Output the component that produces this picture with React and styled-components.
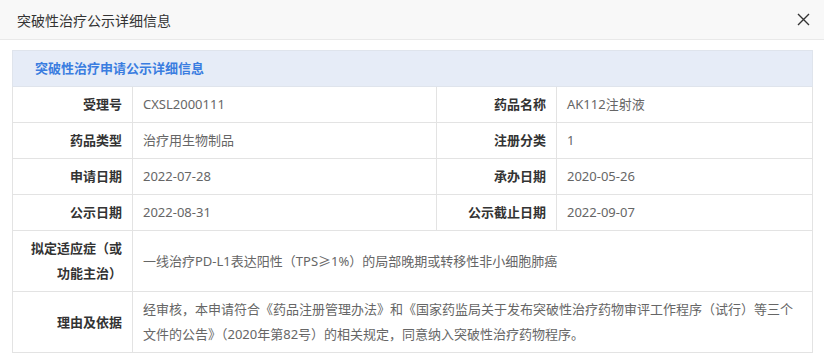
import React from "react";
import styled, { createGlobalStyle } from "styled-components";

const GlobalStyle = createGlobalStyle`
  body {
    margin: 0;
    background: #fff;
    font-family: "Noto Sans", "Noto Sans CJK SC", sans-serif;
  }
`;

const Dialog = styled.div`
  width: 824px;
  height: 360px;
  background: #fff;
  overflow: hidden;
`;

const Header = styled.div`
  height: 40px;
  box-sizing: border-box;
  display: flex;
  align-items: center;
  justify-content: space-between;
  padding: 0 13px 0 17px;
  background: #f8f8f8;
  border-bottom: 1px solid #e9e9e9;
`;

const Title = styled.h2`
  margin: 0;
  font-size: 14px;
  font-weight: normal;
  color: #333;
`;

const Close = styled.button`
  border: 0;
  background: none;
  padding: 0;
  width: 16px;
  height: 16px;
  display: flex;
  align-items: center;
  justify-content: center;
  cursor: pointer;
`;

const Body = styled.div`
  padding: 10px 12px 0;
`;

const Table = styled.table`
  width: 800px;
  table-layout: fixed;
  border-collapse: collapse;
  font-size: 13px;
  line-height: 25px;
`;

const Caption = styled.th`
  text-align: left;
  padding: 5px 22px;
  background: #e6ecf7;
  color: #3a7de0;
  font-weight: bold;
  border: 1px solid #dfe4ec;
`;

const Label = styled.th`
  text-align: right;
  padding: 5px 10px;
  color: #333;
  font-weight: bold;
  border: 1px solid #e3e3e3;
  vertical-align: middle;
`;

const Value = styled.td`
  text-align: left;
  padding: 5px 10px;
  color: #666;
  border: 1px solid #e3e3e3;
  vertical-align: middle;
`;

const pairs = [
  ["受理号", "CXSL2000111", "药品名称", "AK112注射液"],
  ["药品类型", "治疗用生物制品", "注册分类", "1"],
  ["申请日期", "2022-07-28", "承办日期", "2020-05-26"],
  ["公示日期", "2022-08-31", "公示截止日期", "2022-09-07"],
];

const wide = [
  ["拟定适应症（或功能主治）", "一线治疗PD-L1表达阳性（TPS≥1%）的局部晚期或转移性非小细胞肺癌"],
  [
    "理由及依据",
    "经审核，本申请符合《药品注册管理办法》和《国家药监局关于发布突破性治疗药物审评工作程序（试行）等三个文件的公告》（2020年第82号）的相关规定，同意纳入突破性治疗药物程序。",
  ],
];

export default function App() {
  return (
    <Dialog>
      <GlobalStyle />
      <Header>
        <Title>突破性治疗公示详细信息</Title>
        <Close aria-label="关闭">
          <svg width="13" height="13" viewBox="0 0 13 13">
            <path d="M1 1L12 12M12 1L1 12" stroke="#333" strokeWidth="1.4" />
          </svg>
        </Close>
      </Header>
      <Body>
        <Table>
          <colgroup>
            <col style={{ width: 120 }} />
            <col style={{ width: 304 }} />
            <col style={{ width: 120 }} />
            <col style={{ width: 256 }} />
          </colgroup>
          <thead>
            <tr>
              <Caption colSpan={4}>突破性治疗申请公示详细信息</Caption>
            </tr>
          </thead>
          <tbody>
            {pairs.map(([l1, v1, l2, v2]) => (
              <tr key={l1}>
                <Label>{l1}</Label>
                <Value>{v1}</Value>
                <Label>{l2}</Label>
                <Value>{v2}</Value>
              </tr>
            ))}
            {wide.map(([l, v]) => (
              <tr key={l}>
                <Label>{l}</Label>
                <Value colSpan={3}>{v}</Value>
              </tr>
            ))}
          </tbody>
        </Table>
      </Body>
    </Dialog>
  );
}
